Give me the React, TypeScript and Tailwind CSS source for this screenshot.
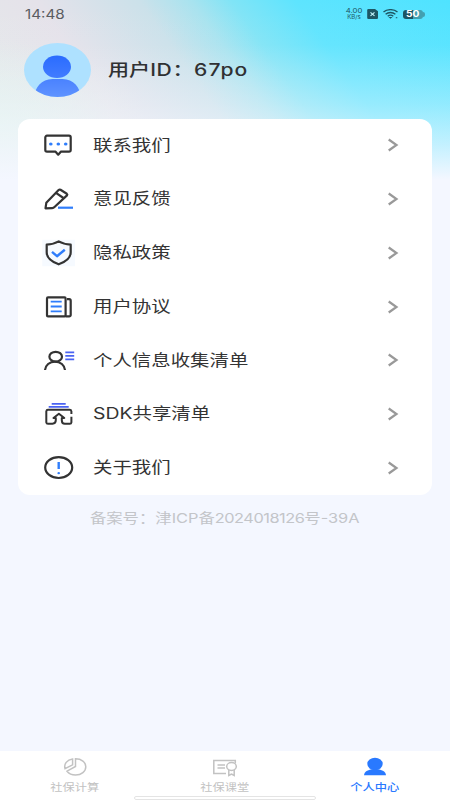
import type { ReactNode } from "react";

const BLUE = "#2f7dfb";
const INDIGO = "#4a63f2";
const INK = "#333333";

function ChatIcon() {
  return (
    <>
      <path d="M4 4.7h22a1.7 1.7 0 0 1 1.7 1.7v12.6a1.7 1.7 0 0 1-1.7 1.7h-8.2L15.2 23.7 12.6 20.7H4a1.7 1.7 0 0 1-1.7-1.7V6.4A1.7 1.7 0 0 1 4 4.7z" />
      <g fill={BLUE} stroke="none">
        <ellipse cx="7.8" cy="13" rx="1.8" ry="1.5" />
        <ellipse cx="15.3" cy="13" rx="1.8" ry="1.5" />
        <ellipse cx="22.7" cy="13" rx="1.8" ry="1.5" />
      </g>
    </>
  );
}

function PencilIcon() {
  return (
    <>
      <path d="M2.5 23.3l.8-5.5L15.6 5q.9-.8 1.900-.2l6.300 4q.9.7.2 1.600L11.500 22q-1 1.100-2.300 1.100z" />
      <path d="M13 7.9l7.4 5.1" />
      <path d="M15 22.7h15" stroke={BLUE} />
    </>
  );
}

function ShieldIcon() {
  return (
    <>
      <path d="M-.7.7h32.7v26.5H-.7z" fill="#f6faff" stroke="none" />
      <path d="M15.7 2.4C12 4.6 8 5.4 3.7 5.7v7.6c0 5.2 4.6 9.4 12 12 7.4-2.6 12-6.8 12-12V5.7C23.4 5.4 19.4 4.6 15.7 2.4z" />
      <path d="M9 12.9l5 4.3 7.8-6.4" stroke={BLUE} strokeWidth="2.4" />
    </>
  );
}

function DocIcon() {
  return (
    <>
      <rect x="4" y="4.4" width="18.6" height="19" rx="1" />
      <path d="M24 6.2h2.2a1.5 1.5 0 0 1 1.5 1.5v14.2a1.5 1.5 0 0 1-1.5 1.5h-3.6" />
      <path d="M7.7 8.7h11M7.7 13.5h11M7.7 18.3h11" stroke={BLUE} strokeWidth="1.8" />
    </>
  );
}

function PersonListIcon() {
  return (
    <>
      <ellipse cx="12.7" cy="10.7" rx="6.3" ry="4.9" />
      <path d="M2 24c.4-4.8 4.6-8.4 10-8.4S21.6 19.2 22 24" />
      <path d="M22.3 6.3h8.9M22.3 9.9h8.9M22.3 13.4h8.9" stroke={INDIGO} strokeWidth="1.8" />
    </>
  );
}

function ShareIcon() {
  return (
    <>
      <path d="M8.7 3.9h14M5.7 6.8h20" stroke={INDIGO} strokeWidth="1.7" />
      <path
        d="M28.4 14v-2.7a1.8 1.8 0 0 0-1.8-1.5H5a1.7 1.7 0 0 0-1.7 1.5v11a1.7 1.7 0 0 0 1.7 1.5h4.5q3.3-.3 3.3-3.500v-2.300H10.500l5.400-4.200 5.400 4.200h-2.500v2.300q0 3.500 3 3.500h4.800a1.700 1.700 0 0 0 1.800-1.500v-5.500"
        strokeWidth="2"
      />
    </>
  );
}

function AboutIcon() {
  return (
    <>
      <ellipse cx="15.7" cy="13.6" rx="13.5" ry="10.4" />
      <path d="M15.7 8v7" stroke={BLUE} strokeWidth="2.4" />
      <ellipse cx="15.7" cy="19.2" rx="1.3" ry="1.1" fill={BLUE} stroke="none" />
    </>
  );
}

const menu = [
  { icon: <ChatIcon />, label: "联系我们" },
  { icon: <PencilIcon />, label: "意见反馈" },
  { icon: <ShieldIcon />, label: "隐私政策" },
  { icon: <DocIcon />, label: "用户协议" },
  { icon: <PersonListIcon />, label: "个人信息收集清单" },
  { icon: <ShareIcon />, label: "SDK共享清单" },
  { icon: <AboutIcon />, label: "关于我们" },
];

function StatusBar() {
  return (
    <div className="flex h-7 items-center justify-between px-[25px] text-[#1d5664]">
      <span className="mt-[2px] inline-block origin-left scale-x-[1.22] text-[12.5px] text-[#5a5c61]">
        14:48
      </span>
      <div className="flex items-center">
        <div className="w-4 text-center text-[6.5px] leading-[6px]">
          <p className="scale-x-[1.2]">4.00</p>
          <p className="scale-x-[1.1] text-[5.5px]">KB/s</p>
        </div>
        <svg className="ml-[5px] h-[10px] w-[11px]" viewBox="0 0 11 10">
          <path d="M1.5 0H8l3 2.3V9q0 1-1.2 1H1.5Q.2 10 .2 9V1Q.2 0 1.5 0z" fill="#1d5664" />
          <path d="M3.5 3.3l4 3.6M7.5 3.3l-4 3.6" stroke="#c5f5fc" strokeWidth="1.1" />
        </svg>
        <svg className="ml-[5px] h-[10px] w-[15px]" viewBox="0 0 15 10" fill="none" stroke="#1d5664" strokeWidth="1.3">
          <path d="M.5 3.1C4.3-.2 10.7-.2 14.5 3.1M2.6 5.2C5.3 2.9 9.7 2.9 12.4 5.2M4.7 7.2c1.7-1.4 3.9-1.4 5.6 0" />
          <path d="M5.5 7.9h4L7.5 9.7zM12.8 8.2h1.5v1h-1.500z" fill="#1d5664" stroke="none" />
        </svg>
        <div className="ml-[5px] flex items-center">
          <div className="flex h-[9px] w-5 items-center justify-center rounded-[3px] bg-linear-to-r from-[#1d5664] from-50% to-[#43a0b0] to-50%">
            <span className="inline-block scale-x-[1.2] text-[8.5px] font-bold leading-none text-white">50</span>
          </div>
          <div className="h-[5px] w-[2px] rounded-r-full bg-[#43a0b0]" />
        </div>
      </div>
    </div>
  );
}

function Avatar() {
  return (
    <svg className="h-[54px] w-[67px] shrink-0" viewBox="0 0 67 54">
      <defs>
        <clipPath id="face">
          <ellipse cx="33.5" cy="27" rx="33.5" ry="27" />
        </clipPath>
        <linearGradient id="head" x1="0" y1="0" x2="0" y2="1">
          <stop offset="0" stopColor="#2a6cff" />
          <stop offset="1" stopColor="#427cff" />
        </linearGradient>
        <linearGradient id="body" x1="0" y1="0" x2="0" y2="1">
          <stop offset="0" stopColor="#4a82ff" />
          <stop offset="1" stopColor="#5f93ff" />
        </linearGradient>
      </defs>
      <ellipse cx="33.5" cy="27" rx="33.5" ry="27" fill="#aee1ff" />
      <g clipPath="url(#face)">
        <ellipse cx="33" cy="23.8" rx="14" ry="11.3" fill="url(#head)" />
        <path d="M10.5 54c0-9.500 7-18 18-18h10c11 0 18 8.500 18 18z" fill="url(#body)" />
      </g>
    </svg>
  );
}

function Tab({ label, active, children }: { label: string; active?: boolean; children: ReactNode }) {
  return (
    <div className={`flex flex-1 flex-col items-center ${active ? "font-medium text-[#2979ff]" : "text-[#c2c2c2]"}`}>
      <svg className="mt-[6px] h-5 w-[26px]" viewBox="0 0 26 20" fill="none" stroke="currentColor" strokeWidth="1.5">
        {children}
      </svg>
      <span className="mt-[3px] inline-block scale-x-[1.24] text-[9.9px] leading-[14px]">{label}</span>
    </div>
  );
}

export default function App() {
  return (
    <div className="flex h-[800px] w-[450px] flex-col overflow-hidden bg-[#f4f7ff] font-[Inter,'Noto_Sans_CJK_SC',sans-serif]">
      <div className="flex flex-1 flex-col bg-[linear-gradient(180deg,rgba(244,247,255,0)_0%,rgba(244,247,255,0.05)_25%,rgba(244,247,255,0.38)_58%,rgba(244,247,255,0.68)_80%,#f4f7ff_100%),radial-gradient(ellipse_150px_90px_at_0%_72%,rgba(221,244,235,0.8),rgba(221,244,235,0)),linear-gradient(55deg,#e4ecea_0%,#e5e2ea_28%,#cbe1ea_46%,#a8e3ef_55%,#80e4f6_62%,#5ee4fe_73%,#4fe3ff_100%)] bg-[length:100%_180px] bg-no-repeat">
        <StatusBar />
        <header className="mt-[15px] flex h-[54px] items-center pl-6">
          <Avatar />
          <h1 className="ml-[17px] mt-[2px] origin-left scale-x-[1.24] whitespace-nowrap text-[17px] font-medium text-[#303133]">
            用户<span className="tracking-[0.03em]">ID：</span>
            <span className="tracking-[0.05em]">67po</span>
          </h1>
        </header>
        <ul className="mx-[18px] mt-[21.5px] rounded-xl bg-white">
          {menu.map((item) => (
            <li key={item.label} className="flex h-[53.75px] items-center pl-[25px] pr-[33px]">
              <svg
                className="h-7 w-8 shrink-0 overflow-visible"
                viewBox="0 0 32 28"
                fill="none"
                stroke={INK}
                strokeWidth="2.2"
                strokeLinejoin="round"
              >
                {item.icon}
              </svg>
              <span className="ml-[18px] origin-left scale-x-[1.245] whitespace-nowrap text-[15.6px] text-[#333]">
                {item.label}
              </span>
              <svg className="ml-auto h-[14px] w-3" viewBox="0 0 12 14" fill="none" stroke="#999" strokeWidth="2.2">
                <path d="M1.7 1.5L9.5 7l-7.8 5.5" />
              </svg>
            </li>
          ))}
        </ul>
        <p className="mt-[13.5px] text-center text-[13.2px] leading-5 text-[#c3c5c9]">
          <span className="inline-block scale-x-[1.24] whitespace-nowrap">
            备案号：津ICP备<span className="tracking-[-0.03em]">2024018126</span>号-39A
          </span>
        </p>
      </div>
      <nav className="relative flex h-[49px] bg-white">
        <Tab label="社保计算">
          <path d="M13.5 1.8v7.7L5 14.2C7 16.8 10 18 13.5 18c6 0 10.300-3.500 10.300-8.200s-4.300-8-10.300-8z" />
          <path d="M10.6 2v5.9L3 11.6C1.700 7 5 2.800 10.600 2z" />
        </Tab>
        <Tab label="社保课堂">
          <path d="M14 16.5H1.8V3.5h21.5v3M5.5 8h7.500M5.500 11h7.500" />
          <ellipse cx="19.5" cy="9.5" rx="4.8" ry="3.9" />
          <path d="M16.8 13v5.5l2.7-1.5 2.7 1.5V13" />
        </Tab>
        <Tab label="个人中心" active>
          <ellipse cx="13" cy="7" rx="7.7" ry="6.2" fill="currentColor" stroke="none" />
          <path d="M2 18.2c.3-3.700 4-5.500 8-6h6c4 .5 7.700 2.300 8 6z" fill="currentColor" stroke="none" />
        </Tab>
        <div className="absolute bottom-0 left-[134px] h-1 w-[182px] rounded-full border border-[#e4e4e4] bg-white" />
      </nav>
    </div>
  );
}
